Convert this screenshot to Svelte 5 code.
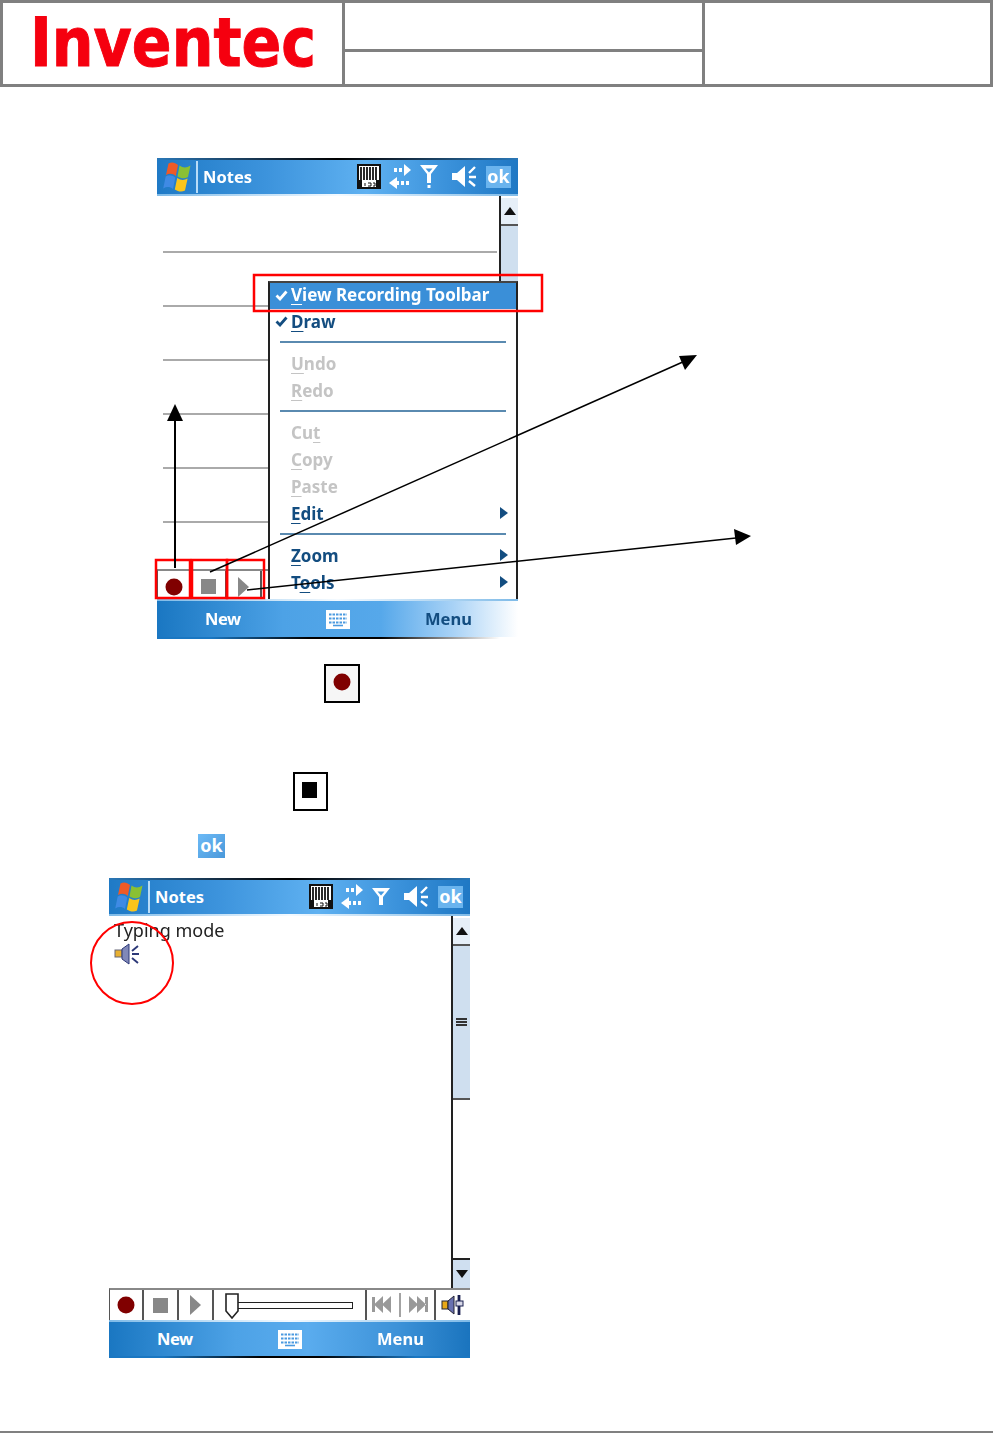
<script>
  const rules = [0, 1, 2, 3, 4, 5];
</script>

{#snippet flag()}
  <svg class="flag" width="28" height="30" viewBox="0 0 28 30">
    <path d="M5.500 1.500 C9 -0.500 12 0.500 15 3 L12.800 14 C10 11.500 6.500 11 3 13 Z" fill="#ee5a28"/>
    <path d="M16.500 3.500 C20 6 23.500 6 27.500 3.500 L25 15 C21.500 17 18 16.500 14.500 14.500 Z" fill="#8ac034"/>
    <path d="M2.700 14.500 C6 12.500 9 13 12.300 15.500 L10 27 C7 24.500 3.500 24.500 0.200 26.500 Z" fill="#3f8ae4"/>
    <path d="M14.200 16 C18 18.500 21 18.500 24.600 16.500 L22 28.500 C18.500 30.500 15 29.500 11.800 27.500 Z" fill="#fac51c"/>
  </svg>
{/snippet}

{#snippet okBadge()}<span class="ok">ok</span>{/snippet}

{#snippet titlebar(dot)}
  <div class="titlebar">
    {@render flag()}
    <span class="divider"></span>
    <span class="title">Notes</span>
    <div class="tray">
      <svg width="32" height="26" viewBox="0 0 32 26">
        <rect x="1" y="1" width="22" height="23" fill="#fff" stroke="#111" stroke-width="2"/>
        <path d="M4 3v13M7 3v13M10 3v13M13 3v13M16 3v13M19 3v13" stroke="#111" stroke-width="1.800"/>
        <path d="M1 16h4v8h14v-8h4v8H1z" fill="#111"/>
        <path d="M8 19v3M11 19h3v3h-3M16 19h2v3h-2" stroke="#111" fill="none"/>
      </svg>
      <svg width="31" height="26" viewBox="0 0 31 26">
        <path d="M5 6h3M10 6h3M15 6h3" stroke="#fff" stroke-width="4"/>
        <path d="M15 0l7 6-7 6z" fill="#fff"/>
        <path d="M8 13l-8 6 8 6z" fill="#fff"/>
        <path d="M7 19h3M12 19h3M17 19h3" stroke="#fff" stroke-width="4"/>
      </svg>
      <svg width="31" height="26" viewBox="0 0 31 26">
        <path d={dot ? 'M0 1h18l-7 9v9h-4v-9zM5.500 4.500l3.500 4 3.500-4z' : 'M0 4h18l-7 9v8h-4v-8zM5.500 7.500l3.500 4 3.500-4z'} fill="#fff" fill-rule="evenodd"/>
        {#if dot}<rect x="7.500" y="21" width="3" height="3" fill="#fff"/>{/if}
      </svg>
      <svg width="35" height="26" viewBox="0 0 35 26">
        <path d="M1 9h5l8-7v21l-8-7H1z" fill="#fff"/>
        <path d="M24 3l-6 6M18 13h7M18 17l6 5" stroke="#fff" stroke-width="2.400" fill="none"/>
      </svg>
      {@render okBadge()}
    </div>
  </div>
{/snippet}

{#snippet scrollUp()}
  <div class="sb-btn sb-up"><svg width="12" height="8" viewBox="0 0 12 8"><path d="M6 0l6 8H0z" fill="#111"/></svg></div>
{/snippet}

{#snippet toolbar()}
  <div class="toolbar">
    <div class="cell c1"><svg width="18" height="18" viewBox="0 0 18 18"><circle cx="9" cy="9" r="8.500" fill="#800000"/></svg></div>
    <div class="cell c2"><span class="stop"></span></div>
    <div class="cell c3"><svg width="11" height="20" viewBox="0 0 11 20"><path d="M0 0l11 10L0 20z" fill="#888"/></svg></div>
    <div class="cell c4">
      <span class="track"></span>
      <svg class="thumb" width="14" height="26" viewBox="0 0 14 26"><path d="M1 1h12v17l-6 7-6-7z" fill="#fff" stroke="#222" stroke-width="1.600"/></svg>
    </div>
    <div class="cell c5">
      <svg width="58" height="26" viewBox="0 0 58 26">
        <path d="M0 5h3v15H0zM11 4v17L2 12.500zM19 4v17l-9-8.500z" fill="#999"/>
        <path d="M28 1v24" stroke="#999" stroke-width="1.800"/>
        <path d="M37 4v17l9-8.500zM45 4v17l9-8.500zM53 5h3v15h-3z" fill="#999"/>
      </svg>
    </div>
    <div class="cell c6">
      <svg width="24" height="22" viewBox="0 0 24 22">
        <rect x="1" y="7" width="6" height="8" fill="#e8a818" stroke="#223" />
        <path d="M7 7l6-5v18l-6-5z" fill="#6870b0" stroke="#223"/>
        <path d="M18 1v20" stroke="#1a2050" stroke-width="2.800"/>
        <rect x="15" y="7" width="7" height="5" fill="#d8d8e8" stroke="#1a2050"/>
      </svg>
    </div>
  </div>
{/snippet}

{#snippet softbar(fade)}
  <div class="softbar" class:fade>
    <span class="soft new-label">New</span>
    <svg width="24" height="19" viewBox="0 0 24 19">
      <rect x="1" y="1" width="22" height="17" fill="#fff" stroke="#fff" stroke-width="2"/>
      <path d="M3 4.500h18M3 8.500h18M3 12.500h18" stroke="#4a9ae0" stroke-width="2" stroke-dasharray="2.500 1"/>
      <path d="M7 15.500h10" stroke="#4a9ae0" stroke-width="1.600"/>
    </svg>
    <span class="soft menu-label">Menu</span>
  </div>
{/snippet}

{#snippet entry(before, key, after, state, hasArrow)}
  <div class="entry {state}">
    <span class="label">{before}<u>{key}</u>{after}</span>
    {#if state === 'checked' || state === 'active'}
      <svg class="check" width="13" height="11" viewBox="0 0 13 11"><path d="M1.500 5.500l3.500 3.500 6.500-7.500" fill="none" stroke="currentColor" stroke-width="2.800"/></svg>
    {/if}
    {#if hasArrow}
      <svg class="sub" width="8" height="12" viewBox="0 0 8 12"><path d="M0 0l8 6-8 6z" fill="currentColor"/></svg>
    {/if}
  </div>
{/snippet}

<div class="page">
  <header class="head">
    <div class="logo-cell">
      <svg class="logo" width="339" height="81" viewBox="0 0 339 81" role="img" aria-label="Inventec">
        <text x="27" y="63" class="logo-text" textLength="286" lengthAdjust="spacingAndGlyphs">Inventec</text>
      </svg>
    </div>
    <div class="mid-cell"><div class="mid-top"></div><div class="mid-bottom"></div></div>
    <div class="right-cell"></div>
  </header>

  <section class="phone shot-one">
    {@render titlebar(true)}
    <div class="body column">
      <div class="row">
        <div class="canvas">
          {#each rules as r (r)}<div class="rule"></div>{/each}
        </div>
        <div class="scroll">{@render scrollUp()}<div class="sb-fill"></div></div>
      </div>
      {@render toolbar()}
      <div class="menu">
        {@render entry('', 'V', 'iew Recording Toolbar', 'active', false)}
        {@render entry('', 'D', 'raw', 'checked', false)}
        <div class="sep"></div>
        {@render entry('', 'U', 'ndo', 'off', false)}
        {@render entry('', 'R', 'edo', 'off', false)}
        <div class="sep"></div>
        {@render entry('Cu', 't', '', 'off', false)}
        {@render entry('', 'C', 'opy', 'off', false)}
        {@render entry('', 'P', 'aste', 'off', false)}
        {@render entry('', 'E', 'dit', 'on', true)}
        <div class="sep"></div>
        {@render entry('', 'Z', 'oom', 'on', true)}
        {@render entry('T', 'o', 'ols', 'on', true)}
      </div>
    </div>
    {@render softbar(true)}
  </section>

  <div class="sample rec-sample"><svg width="18" height="18" viewBox="0 0 18 18"><circle cx="9" cy="9" r="8.500" fill="#800000"/></svg></div>
  <div class="sample stop-sample"><span class="stop-black"></span></div>
  <div class="ok-sample">{@render okBadge()}</div>

  <section class="phone shot-two">
    {@render titlebar(false)}
    <div class="body">
      <div class="content">
        <div class="typing">Typing mode</div>
        <svg class="note-icon" width="26" height="22" viewBox="0 0 26 22">
          <rect x="1" y="7" width="7" height="7" fill="#e8b030" stroke="#667"/>
          <path d="M8 6l7-5v20l-7-5z" fill="#8088b8" stroke="#2c3878"/>
          <path d="M24 3l-6 5M18 11h7M18 15l6 5" stroke="#2c3878" stroke-width="1.900" fill="none"/>
        </svg>
      </div>
      <div class="scroll">
        {@render scrollUp()}
        <div class="sb-thumb"><span class="grip"></span></div>
        <div class="sb-white"></div>
        <div class="sb-btn sb-down"><svg width="12" height="8" viewBox="0 0 12 8"><path d="M0 0h12L6 8z" fill="#111"/></svg></div>
      </div>
    </div>
    {@render toolbar()}
    {@render softbar(false)}
  </section>

  <div class="foot"></div>

  <svg class="marks" width="993" height="1433" viewBox="0 0 993 1433">
    <g fill="none" stroke="#ff0000">
      <g stroke-width="2.500">
        <rect x="254" y="275" width="288" height="36"/>
        <rect x="156" y="560" width="34" height="38"/>
        <rect x="192" y="560" width="35" height="38"/>
        <rect x="227" y="560" width="37" height="38"/>
      </g>
      <circle cx="132" cy="963" r="41" stroke-width="2"/>
    </g>
    <path d="M175 568V418" stroke="#000" stroke-width="2" fill="none"/>
    <path d="M175 404l8 17h-16z" fill="#000"/>
    <path d="M210 572L685 361" stroke="#000" stroke-width="1.500" fill="none"/>
    <path d="M697 355l-18 1 6 14z" fill="#000"/>
    <path d="M247 590L736 538" stroke="#000" stroke-width="1.500" fill="none"/>
    <path d="M751 536l-17-7 2 16z" fill="#000"/>
  </svg>
</div>

<style>
  :global(body) { margin: 0; background: #fff; }
  .page {
    position: relative;
    width: 993px;
    height: 1433px;
    overflow: hidden;
    font-family: "Noto Sans", "DejaVu Sans", sans-serif;
  }
  .head {
    display: grid;
    grid-template-columns: 342px 360px 1fr;
    height: 81px;
    border: 3px solid #808080;
  }
  .logo-cell { border-right: 3px solid #808080; box-sizing: border-box; }
  .logo { display: block; }
  .logo-text {
    font-family: "DejaVu Sans", sans-serif;
    font-weight: 700;
    font-size: 68px;
    fill: #f5000f;
    stroke: #f5000f;
    stroke-width: 1px;
  }
  .mid-cell { display: flex; flex-direction: column; border-right: 3px solid #808080; box-sizing: border-box; }
  .mid-top { height: 46px; border-bottom: 3px solid #808080; }
  .mid-bottom { flex: 1; }

  .phone {
    width: 361px;
    display: flex;
    flex-direction: column;
    filter: blur(0.45px);
  }
  .shot-one { margin: 71px 0 0 157px; height: 481px; }
  .shot-two { margin: 20px 0 0 109px; height: 480px; }

  .titlebar {
    position: relative;
    height: 38px;
    flex: none;
    display: flex;
    align-items: center;
    padding: 0 7px 0 6px;
    box-sizing: border-box;
    background: linear-gradient(90deg, #1f7ac6 0%, #3c93dc 30%, #5fb1f1 58%, #3b92db 80%, #1f78c4 100%);
  }
  .titlebar::before {
    content: "";
    position: absolute;
    left: 0; right: 0; top: 0;
    height: 2px;
    background: linear-gradient(90deg, #2a78b8, #123 35%, #000 50%, #123 65%, #2a78b8);
  }
  .titlebar::after {
    content: "";
    position: absolute;
    left: 0; right: 0; bottom: 0;
    height: 2px;
    background: linear-gradient(90deg, #7fbbe8, #f4faff 50%, #7fbbe8);
  }
  .flag { flex: none; }
  .divider { width: 2px; height: 32px; margin-left: 5px; background: #b8dcf8; flex: none; }
  .title { margin: 0 0 2px 5px; color: #fff; font-weight: 700; font-size: 16.5px; }
  .tray { margin-left: auto; display: flex; align-items: center; }
  .tray svg { display: block; flex: none; }
  .ok {
    display: block;
    width: 27px;
    height: 24px;
    line-height: 23px;
    text-align: center;
    color: #fff;
    font-weight: 700;
    font-size: 18px;
    background: linear-gradient(135deg, #6cbaf6, #4a98da);
  }
  .tray .ok { width: 25px; height: 22px; line-height: 21px; background: #6ab4ee; }

  .body { position: relative; flex: 1; min-height: 0; display: flex; }
  .column { flex-direction: column; }
  .row { flex: 1; display: flex; min-height: 0; }
  .canvas { flex: 1; padding: 1px 0 0 6px; }
  .rule { width: 334px; height: 2px; margin-top: 52px; background: #aaa; }
  .rule:first-child { margin-top: 54px; }

  .scroll {
    width: 17px;
    flex: none;
    display: flex;
    flex-direction: column;
    padding-top: 2px;
    border-left: 2px solid #222;
  }
  .sb-btn {
    height: 28px;
    flex: none;
    display: flex;
    align-items: center;
    justify-content: center;
    background: #e6eff8;
    box-sizing: border-box;
  }
  .sb-up { border-bottom: 2px solid #555; }
  .sb-down { height: 30px; background: #cfdff0; border-top: 2px solid #222; }
  .sb-fill { flex: 1; background: #cfdfef; }
  .sb-thumb {
    height: 152px;
    flex: none;
    display: flex;
    align-items: center;
    justify-content: center;
    background: #cfdfef;
    border-bottom: 2px solid #555;
  }
  .grip {
    width: 11px;
    height: 8px;
    background: repeating-linear-gradient(#333 0, #333 2px, transparent 2px, transparent 3px);
  }
  .sb-white { flex: 1; }

  .toolbar {
    height: 32px;
    flex: none;
    display: flex;
    box-sizing: border-box;
    background: #fff;
    border-top: 2px solid #888;
    border-left: 1px solid #555;
  }
  .shot-one .toolbar { height: 30px; }
  .shot-one .cell { padding-top: 3px; }
  .cell {
    position: relative;
    display: flex;
    align-items: center;
    justify-content: center;
    box-sizing: border-box;
    border-right: 2px solid #555;
  }
  .c1 { width: 34px; }
  .c2 { width: 35px; }
  .c3 { width: 35px; }
  .c4 { width: 153px; }
  .c5 { width: 69px; }
  .c6 { flex: 1; border-right: 0; }
  .stop { width: 15px; height: 15px; background: #888; }
  .track {
    width: 119px;
    height: 5px;
    margin-left: 6px;
    border: 1px solid #222;
    background: #fff;
    box-sizing: content-box;
  }
  .thumb { position: absolute; left: 11px; top: 3px; }

  .softbar {
    position: relative;
    height: 40px;
    flex: none;
    display: grid;
    grid-template-columns: 121px 99px 1fr;
    align-items: center;
    padding-left: 48px;
    background: linear-gradient(90deg, #1a77c2 0%, #4da2e6 35%, #5aacee 55%, #3d92d8 80%, #1a74be 100%);
  }
  .shot-two .softbar { height: 38px; }
  .softbar.fade {
    background: linear-gradient(90deg, #1a77c2 0%, #4da2e6 35%, #56a8ea 62%, #a8d2f6 82%, #fff 100%);
  }
  .softbar::before {
    content: "";
    position: absolute;
    left: 0; right: 0; top: 0;
    height: 2px;
    background: linear-gradient(90deg, #7fbbe8, #f4faff 50%, #7fbbe8);
  }
  .softbar::after {
    content: "";
    position: absolute;
    left: 0; right: 0; bottom: 0;
    height: 2px;
    background: linear-gradient(90deg, #1a77c2, #1a77c2 15%, #000 42%, #000 58%, #1a77c2 85%, #1a77c2);
  }
  .softbar.fade::after { background: linear-gradient(90deg, #1a77c2, #1a77c2 15%, #000 42%, #000 62%, #fff 95%); }
  .soft { margin-bottom: 2px; color: #fff; font-weight: 700; font-size: 16.5px; }
  .new-label { letter-spacing: -0.5px; }
  .fade .menu-label { color: #134d80; }

  .menu {
    position: absolute;
    top: 85px;
    right: 0;
    bottom: 0;
    width: 250px;
    box-sizing: border-box;
    background: #fff;
    border: 2px solid #222;
    border-bottom: 0;
    border-top-color: #444;
  }
  .entry {
    position: relative;
    height: 27px;
    box-sizing: border-box;
    display: flex;
    align-items: center;
    padding: 0 0 2px 21px;
    font-weight: 700;
    font-size: 17px;
    color: #134d80;
  }
  .label { white-space: nowrap; }
  .label u { text-underline-offset: 3px; }
  .active { height: 26px; padding-bottom: 3px; background: #3a8fd8; color: #fff; }
  .off { color: #c4c4c4; }
  .check { position: absolute; left: 5px; top: 7px; }
  .sub { position: absolute; right: 8px; top: 6px; }
  .sep { height: 2px; margin: 5px 10px 8px 10px; background: #5a8ab0; }

  .content { flex: 1; padding: 3px 0 0 5px; }
  .typing { color: #222; font-size: 18px; line-height: 22px; }
  .note-icon { display: block; margin-top: 2px; }

  .sample {
    display: flex;
    align-items: center;
    justify-content: center;
    box-sizing: border-box;
    height: 39px;
    border: 2px solid #000;
  }
  .rec-sample { width: 36px; margin: 25px 0 0 324px; background: #f6f6f6; }
  .rec-sample svg { margin-bottom: 3px; }
  .stop-sample { width: 35px; margin: 69px 0 0 293px; }
  .stop-black { width: 15px; height: 16px; margin: 0 2px 3px 0; background: #000; }
  .ok-sample { width: 27px; margin: 23px 0 0 198px; }

  .foot { height: 2px; margin-top: 73px; background: #808080; }

  .marks { position: absolute; left: 0; top: 0; pointer-events: none; }
</style>
